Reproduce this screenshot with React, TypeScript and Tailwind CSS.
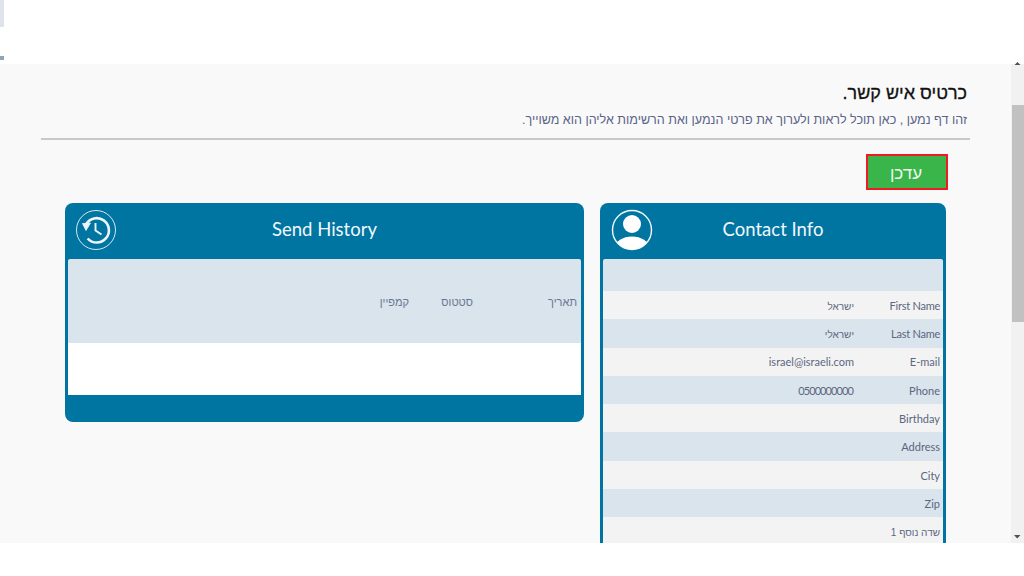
const rows: [string, string][] = [
  ["First Name", "ישראל"],
  ["Last Name", "ישראלי"],
  ["E-mail", "israel@israeli.com"],
  ["Phone", "0500000000"],
  ["Birthday", ""],
  ["Address", ""],
  ["City", ""],
  ["Zip", ""],
  ["שדה נוסף 1", ""],
];

function UserIcon() {
  return (
    <svg width="42" height="42" viewBox="0 0 42 42">
      <defs>
        <clipPath id="c"><circle cx="21" cy="21" r="19.5" /></clipPath>
      </defs>
      <circle cx="21" cy="21" r="19.5" fill="none" stroke="#f4f8fa" strokeWidth="1.4" />
      <circle cx="21" cy="15" r="9" fill="#fff" />
      <ellipse cx="21" cy="39" rx="17" ry="11.5" fill="#fff" clipPath="url(#c)" />
    </svg>
  );
}

function HistoryIcon() {
  return (
    <svg width="42" height="42" viewBox="0 0 42 42" fill="none" stroke="#eef5f8">
      <circle cx="21" cy="21" r="19.5" strokeWidth="0.9" />
      <path d="M11 15.500A12.200 12.200 0 1 1 12.600 29.500" strokeWidth="2.600" />
      <path d="M7.500 14.500 L15.500 14 L11 21.500 Z" fill="#eef5f8" strokeWidth="0.8" />
      <path d="M20.500 14V21.500L26.500 25.500" strokeWidth="1.900" />
    </svg>
  );
}

const heb = "font-['Liberation_Sans',sans-serif] text-[10px]";

export default function App() {
  return (
    <div dir="ltr" className="relative flex h-[576px] w-[1024px] flex-col overflow-hidden bg-white font-['Lato','Liberation_Sans',sans-serif]">
      <div className="h-16 shrink-0">
        <div className="h-[27px] w-1 bg-[#dfe3ec]" />
        <div className="mt-[29px] h-1 w-1 bg-[#8fa5b5]" />
      </div>
      <div className="flex h-[479px] shrink-0 overflow-hidden bg-[#f9f9f9]">
        <main dir="rtl" className="h-full w-[1011px] shrink-0 overflow-hidden">
          <div className="mr-[41px] ml-[41px] h-[76px] border-b-2 border-[#c9c9c9] pt-[17px] pr-[3px]">
            <h1 className="font-['Liberation_Sans',sans-serif] text-[18px] leading-6 text-[#111] [-webkit-text-stroke:0.3px_#111]">כרטיס איש קשר.</h1>
            <p className="mt-[6px] font-['Liberation_Sans',sans-serif] text-[12.55px] leading-[18px] text-[#5a6488]">
              זהו דף נמען , כאן תוכל לראות ולערוך את פרטי הנמען ואת הרשימות אליהן הוא משוייך.
            </p>
          </div>
          <div className="mt-3.5 mr-[63px]">
            <button className="block h-[36px] w-[82px] border-2 border-[#ed1c24] bg-[#39b54a] pt-[3px] pr-[2px] font-['Liberation_Sans',sans-serif] text-[17px] leading-[30px] text-[#f1f8f1]">
              עדכן
            </button>
          </div>
          <div className="mt-[13px] mr-[65px] flex items-start gap-4">
            <section className="w-[346px] shrink-0 rounded-t-lg bg-[#0075a2] px-[3px]">
              <header dir="ltr" className="relative flex h-[56px] items-center justify-center pb-[3px]">
                <span className="absolute top-[6px] left-[8px] flex"><UserIcon /></span>
                <span className="text-[18.500px] text-[#f1f7fa]">Contact Info</span>
              </header>
              <div className="h-[32px] rounded-t-[2px] bg-[#d9e4ec]" />
              {rows.map(([k, v], i) => (
                <div key={k} className={`flex h-[28.3px] items-center text-[11px] text-[#5c6680] ${i % 2 ? "bg-[#d9e4ec]" : "bg-[#f3f3f3]"}`}>
                  <span className={`w-[89px] shrink-0 pt-[2px] pr-[3px] ${i === 8 ? heb : ""} ${i < 2 ? "tracking-[-0.25px]" : ""}`}>{k}</span>
                  <span className={`pt-[2px] ${i < 2 ? heb : ""} ${i === 3 ? "mr-[1px] tracking-[-0.9px]" : ""}`}>{v}</span>
                </div>
              ))}
            </section>
            <section className="w-[519px] shrink-0 rounded-lg bg-[#0075a2] px-[3px] pb-[27px]">
              <header dir="ltr" className="relative flex h-[56px] items-center justify-center pb-[3px]">
                <span className="absolute top-[6px] left-[7px] flex"><HistoryIcon /></span>
                <span className="text-[18.500px] text-[#f1f7fa]">Send History</span>
              </header>
              <div className="flex h-[84px] rounded-t-[2px] bg-[#d9e4ec] font-['Liberation_Sans',sans-serif] text-[11px] text-[#6b7593]">
                <span className="w-[108px] pt-[35px] pr-[4px]">תאריך</span>
                <span className="w-[64px] pt-[35px]">סטטוס</span>
                <span className="pt-[35px]">קמפיין</span>
              </div>
              <div className="h-[52px] bg-white" />
            </section>
          </div>
        </main>
        <div className="flex h-full w-[13px] shrink-0 flex-col bg-[#f1f1f1]">
          <div className="h-[41px] shrink-0" />
          <div className="ml-px h-[217px] bg-[#c1c1c1]" />
          <div className="flex-1" />
          <svg width="13" height="13" viewBox="0 0 13 13" className="shrink-0">
            <path d="M3 5h6.500L6.200 8.500z" fill="#505050" />
          </svg>
        </div>
      </div>
      <svg width="13" height="5" viewBox="0 0 13 5" className="absolute top-[61px] left-[1011px]">
        <path d="M3.500 4h6L6.500 1z" fill="#505050" />
      </svg>
    </div>
  );
}
